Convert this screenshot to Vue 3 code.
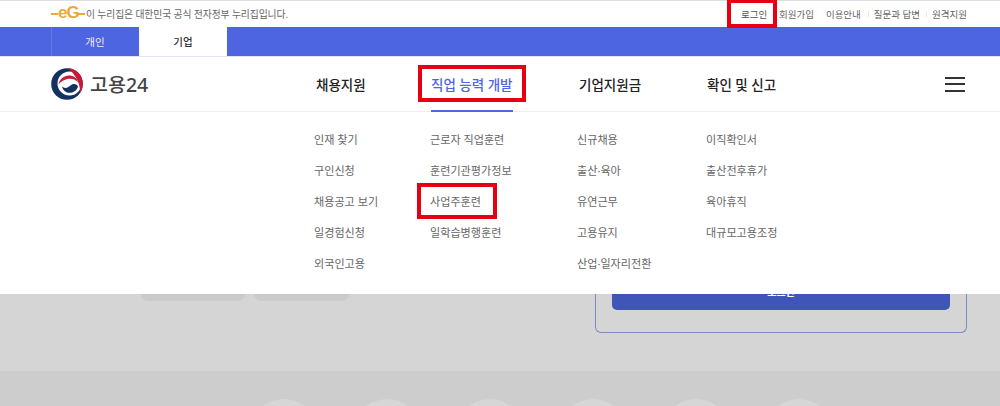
<script setup>
const links = ['회원가입', '이용안내', '질문과 답변', '원격지원']
const menus = [
  { title: '채용지원', width: 115, items: ['인재 찾기', '구인신청', '채용공고 보기', '일경험신청', '외국인고용'] },
  { title: '직업 능력 개발', width: 148, active: true, items: ['근로자 직업훈련', '훈련기관평가정보', '사업주훈련', '일학습병행훈련'] },
  { title: '기업지원금', width: 128, items: ['신규채용', '출산·육아', '유연근무', '고용유지', '산업·일자리전환'] },
  { title: '확인 및 신고', width: 120, items: ['이직확인서', '출산전후휴가', '육아휴직', '대규모고용조정'] },
]
const circles = [1, 2, 3, 4, 5, 6]
</script>

<template>
  <div class="page">
    <div class="topbar">
      <div class="notice">
        <span class="eg"><i class="eg-line"></i><b>eG</b><i class="eg-line short"></i></span>
        <span>이 누리집은 대한민국 공식 전자정부 누리집입니다.</span>
      </div>
      <div class="links">
        <a class="login marked">로그인</a>
        <a v-for="l in links" :key="l" class="link">{{ l }}</a>
      </div>
    </div>

    <div class="tabs">
      <span class="tab">개인</span>
      <span class="tab on">기업</span>
    </div>

    <header class="nav">
      <div class="logo">
        <svg width="32" height="32" viewBox="0 0 32 32" aria-hidden="true">
          <circle cx="16" cy="16" r="15.800" fill="#14315f" />
          <circle cx="18.500" cy="15.500" r="12" fill="#fff" />
          <path d="M17 .2C25.500 .3 31.800 7 31.800 15.500 31.800 19 30.800 22.500 28.800 25.200 30 17 25.500 7.500 17 .2Z" fill="#c8193a" />
          <path d="M7.500 16.500C8.500 11 13 7.500 18 7.500 22.500 7.500 26 10 27 14 24.500 11.500 21 10.300 17.500 10.800 13.500 11.400 10 13.300 7.500 16.500Z" fill="#c8193a" />
          <path d="M11 18.500C12.500 20 15 20.300 17 19.300 19 18.300 20.500 16 23 16 25 16 26.500 17 27 18.500 25.800 22.500 22.500 24.800 18.500 24.800 15 24.800 12 22.500 11 18.500Z" fill="#14315f" />
        </svg>
        <span class="logo-text">고용24</span>
      </div>
      <nav class="gnb">
        <div v-for="m in menus" :key="m.title" class="gnb-item" :style="{ width: m.width + 'px' }">
          <span class="gnb-label" :class="{ active: m.active }">{{ m.title }}</span>
        </div>
      </nav>
      <button class="burger" aria-label="메뉴"><i></i><i></i><i></i></button>
    </header>

    <section class="panel">
      <ul v-for="(m, c) in menus" :key="m.title" class="col" :class="'col' + c">
        <li v-for="it in m.items" :key="it">
          <span :class="{ boxed: it === '사업주훈련' }">{{ it }}</span>
        </li>
      </ul>
    </section>

    <section class="hero">
      <div class="pills"><span class="pill p1"></span><span class="pill p2"></span></div>
      <div class="card"><div class="cta"><span>로그인</span></div></div>
    </section>

    <section class="band">
      <span v-for="c in circles" :key="c" class="circle"></span>
    </section>
  </div>
</template>

<style scoped>
.page { width: 1000px; height: 406px; overflow: hidden; background: #fff; font-family: "Noto Sans", "Noto Sans CJK KR", sans-serif; color: #555; }
.topbar { height: 27px; box-sizing: border-box; border-top: 1px solid #dedede; display: flex; align-items: center; justify-content: space-between; padding: 0 33px 0 51px; font-size: 9.500px; color: #666; }
.notice { display: flex; align-items: center; gap: 5px; font-size: 9.800px; letter-spacing: -0.100px; }
.eg { display: flex; align-items: center; width: 30px; color: #eaa93f; }
.eg b { display: block; font: 700 17px/1 "Liberation Sans", sans-serif; letter-spacing: -1px; margin: -3px 0 0; flex: none; }
.eg-line { display: block; width: 7px; height: 1.500px; background: #eaa93f; flex: none; }
.eg-line.short { width: 7px; margin-left: -1px; }
.links { display: flex; align-items: center; }
.links a { display: block; white-space: nowrap; }
.login { width: 26px; position: relative; color: #555; }
.link { position: relative; margin-left: 12px; }
.link:nth-child(4) { margin-left: 13px; }
.link:nth-child(4)::before, .link:nth-child(5)::before { content: ""; position: absolute; left: -6px; top: 4px; bottom: 4px; width: 1px; background: #e8e8e8; }
.marked::after { content: ""; position: absolute; left: -14px; right: -10px; top: -8px; bottom: -7px; border: 4px solid #e60012; }

.tabs { height: 29px; box-sizing: border-box; background: #4d65e0; padding-left: 51px; display: flex; font-size: 10.500px; }
.tab { width: 88px; display: flex; align-items: center; justify-content: center; color: #eef; box-shadow: inset 1px 0 0 #6479e6; }
.tab.on { background: #fff; color: #333; font-weight: 500; box-shadow: none; }

.nav { height: 56px; box-sizing: border-box; border-top: 1px solid #e2e5f6; border-bottom: 1px solid #eee; display: flex; align-items: center; padding: 0 35px 0 51px; position: relative; }
.logo { display: flex; align-items: center; gap: 7px; width: 265px; }
.logo-text { font-size: 19.500px; font-weight: 500; color: #444; line-height: 1; margin-top: 2px; }
.gnb { display: flex; height: 54px; }
.gnb-item { display: flex; align-items: center; }
.gnb-label { font-size: 13.500px; font-weight: 500; color: #222; white-space: nowrap; position: relative; }
.gnb-label.active { color: #4d65e0; }
.gnb-label.active::before { content: ""; position: absolute; left: 0; right: 0; top: 36px; height: 2px; background: #4d65e0; }
.gnb-label.active::after { content: ""; position: absolute; left: -13px; right: -13px; top: -9px; bottom: -8px; border: 4px solid #e60012; }
.burger { margin-left: auto; width: 20px; height: 15px; padding: 0; background: none; border: 0; display: flex; flex-direction: column; justify-content: space-between; }
.burger i { display: block; height: 2px; background: #333; }

.panel { height: 182px; box-sizing: border-box; padding: 12px 0 0 314px; display: flex; align-items: flex-start; font-size: 11.100px; color: #666; }
.col { list-style: none; margin: 0; padding: 0; }
.col0 { width: 116px; }
.col1 { width: 147px; }
.col2 { width: 129px; }
.col li { height: 31px; line-height: 31px; white-space: nowrap; }
.boxed { position: relative; display: inline-block; line-height: 16px; }
.boxed::after { content: ""; position: absolute; left: -13px; right: -16px; top: -11px; bottom: -9px; border: 4px solid #e60012; }

.hero { height: 77px; box-sizing: border-box; background: #d5d5d5; display: flex; padding-left: 141px; padding-right: 33px; align-items: flex-start; }
.pills { display: flex; gap: 9px; }
.pill { display: block; height: 7px; background: #cbcbcb; border-radius: 0 0 7px 7px; }
.p1 { width: 104px; }
.p2 { width: 95px; }
.card { margin-left: auto; width: 372px; height: 39px; box-sizing: border-box; border: 1px solid #7f8bc9; border-top: 0; border-radius: 0 0 6px 6px; padding: 0 16px; }
.cta { height: 16px; background: #3f55b8; border-radius: 0 0 5px 5px; overflow: hidden; display: flex; justify-content: center; }
.cta span { color: #fff; font-size: 10px; font-weight: 700; line-height: 10px; margin-top: -7px; height: 10px; }

.band { height: 35px; background: #cdcdcd; padding: 28px 0 0 249px; box-sizing: border-box; display: flex; gap: 33px; overflow: hidden; }
.circle { flex: none; width: 70px; height: 70px; border-radius: 50%; background: #d6d6d6; }
</style>
